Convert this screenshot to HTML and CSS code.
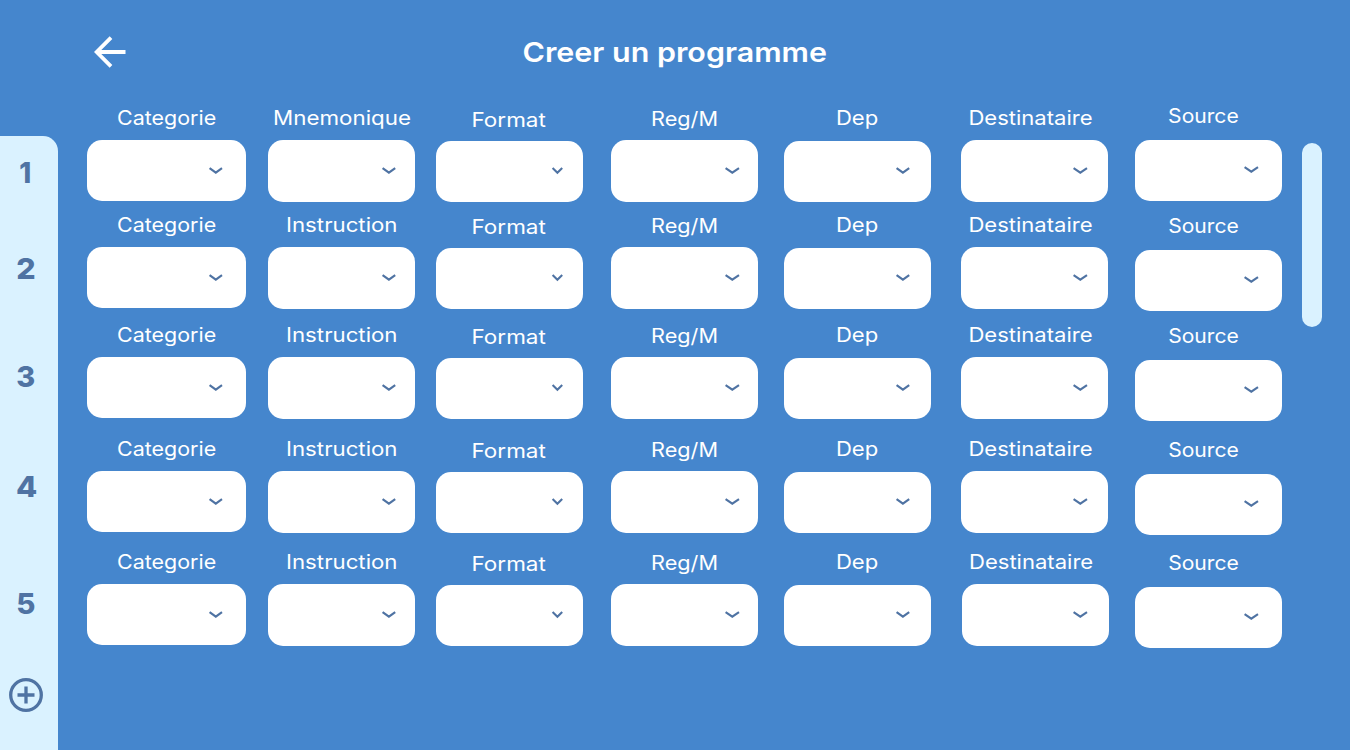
FILE: index.html
```html
<!DOCTYPE html>
<html lang="fr">
<head>
<meta charset="utf-8">
<title>Creer un programme</title>
<link rel="stylesheet" href="styles.css">
</head>
<body>
<div class="page">
  <header class="header">
    <svg class="back" width="32" height="32" viewBox="0 0 32 32"><path d="M31.5 16H3M17 1.7L2.7 16L17 30.3"/></svg>
    <svg class="title" width="306" height="40"><text x="0.5" y="27.3" textLength="304.5" lengthAdjust="spacingAndGlyphs">Creer un programme</text></svg>
  </header>
  <div class="content">
    <aside class="sidebar">
      <svg class="number n1" width="52" height="32"><text x="19.2" y="27.3" textLength="12" lengthAdjust="spacingAndGlyphs">1</text></svg>
      <svg class="number n2" width="52" height="32"><text x="16.2" y="27.3" textLength="19.4" lengthAdjust="spacingAndGlyphs">2</text></svg>
      <svg class="number n3" width="52" height="32"><text x="16.2" y="27.3" textLength="19" lengthAdjust="spacingAndGlyphs">3</text></svg>
      <svg class="number n4" width="52" height="32"><text x="16" y="27.3" textLength="21.3" lengthAdjust="spacingAndGlyphs">4</text></svg>
      <svg class="number n5" width="52" height="32"><text x="16.2" y="27.3" textLength="19.2" lengthAdjust="spacingAndGlyphs">5</text></svg>
      <svg class="add" width="36" height="36" viewBox="0 0 36 36"><circle cx="18" cy="18" r="15.3"/><path d="M18 9.5V26.5M9.5 18H26.5"/></svg>
    </aside>
    <main class="rows" id="rows"></main>
    <div class="scrollbar"></div>
  </div>
</div>
<script src="app.js"></script>
</body>
</html>
```
FILE: styles.css
```css
* { box-sizing: border-box; }
body { margin: 0; background: #4586cd; font-family: Inter, "Open Sans", sans-serif; }
svg { display: block; flex: none; overflow: visible; }
.page { width: 1350px; height: 750px; overflow: hidden; background: #4586cd; display: flex; flex-direction: column; }
.header { height: 100px; flex: none; display: flex; align-items: flex-start; padding: 36px 0 0 94px; }
.back path { fill: none; stroke: #fff; stroke-width: 3.8; }
.title { margin: -1px 0 0 396px; font-size: 27.5px; font-weight: 600; fill: #fff; }
.content { display: flex; align-items: flex-start; height: 650px; }
.sidebar { width: 58px; height: 614px; margin-top: 36px; flex: none; background: #daf2ff; border-radius: 0 15px 0 0; display: flex; flex-direction: column; }
.number { font-size: 29px; font-weight: 800; fill: #4f73a3; }
.n1 { margin-top: 20px; }
.n2 { margin-top: 64px; }
.n3 { margin-top: 76px; }
.n4 { margin-top: 78px; }
.n5 { margin-top: 85px; }
.add { margin: 58px 0 0 8px; fill: none; stroke: #4f73a3; stroke-width: 3.3; }
.rows { width: 1244px; flex: none; padding-left: 28.7px; display: flex; flex-direction: column; }
.row { display: flex; align-items: flex-start; height: 107px; flex: none; }
.row:nth-child(2) { height: 110px; }
.row:nth-child(3) { height: 114px; }
.row:nth-child(4) { height: 113px; }
.field { flex: none; }
.label { font-size: 19.7px; font-weight: 400; fill: #fff; }
.box { height: 61.3px; border-radius: 15px; background: #fff; display: flex; align-items: flex-start; }
.chevron { fill: none; stroke: #4f73a3; stroke-width: 2.1; }
.scrollbar { width: 20px; height: 184px; margin-top: 43px; flex: none; border-radius: 10px; background: #daf2ff; }
```
FILE: app.js
```js
// x: box left, w: box width, top: box offset in the row, label: [text, ink left, length], base: baseline,
// chev: chevron left and width
const columns = [
  { x: 86.7, w: 159.8, top: 40.4, h: 60.6, label: ["Categorie", 116.7, 99.2], base: 25.3, chev: [209, 13.6] },
  { x: 268, w: 147.5, top: 40.2, h: 61.4, label: ["Instruction", 286, 111.5], base: 25.3, chev: [381.6, 13.8] },
  { x: 435.7, w: 147.5, top: 41, label: ["Format", 471.2, 74.3], base: 26.9, chev: [552.5, 10.8] },
  { x: 610.7, w: 147.3, top: 40.2, h: 61.4, label: ["Reg/M", 650.7, 67], base: 26.2, chev: [725.2, 14.6] },
  { x: 784.1, w: 147.3, top: 41, label: ["Dep", 836, 42.3], base: 25.3, chev: [896.2, 13.8] },
  { x: 961, w: 147.5, top: 40.2, h: 61.4, label: ["Destinataire", 968.4, 124.2], base: 25.3, chev: [1073.2, 14.6] },
  { x: 1134.7, w: 147.3, top: 42.7, label: ["Source", 1167.9, 70.6], base: 26.2, chev: [1244.2, 14.6] }
];

function field(c, gap) {
  const [text, left, length] = c.label;
  const [cx, cw] = c.chev;
  const chevTop = 67.2 + (c.shift || 0) - c.top;
  return `<div class="field" style="width:${c.w}px;margin-left:${gap}px">
    <svg class="label" width="${c.w}" height="${c.top}"><text x="${left - c.x}" y="${c.base}" textLength="${length}" lengthAdjust="spacingAndGlyphs">${text}</text></svg>
    <div class="box" style="height:${c.h || 61.3}px;padding:${chevTop}px 0 0 ${cx - c.x}px">
      <svg class="chevron" width="${cw}" height="7"><path d="M0.6 1.1L${cw / 2} 5.7L${cw - 0.6} 1.1"/></svg>
    </div></div>`;
}

let html = "";
for (let r = 0; r < 5; r++) {
  let edge = 86.7;
  html += '<div class="row">';
  columns.forEach((base, i) => {
    const c = { ...base };
    if (i === 6) c.shift = r === 0 ? -0.9 : 2;
    if (r === 0 && i === 1) c.label = ["Mnemonique", 273, 138];
    if (r === 0 && i === 6) Object.assign(c, { x: 1135.1, top: 39.7, base: 23.3, label: ["Source", 1168.2, 70.6] });
    if (r === 4 && i === 5) Object.assign(c, { x: 962, w: 146.6, label: ["Destinataire", 969, 124.2], chev: [1073.5, 14.6] });
    html += field(c, c.x - edge);
    edge = c.x + c.w;
  });
  html += "</div>";
}
document.getElementById("rows").innerHTML = html;
```
